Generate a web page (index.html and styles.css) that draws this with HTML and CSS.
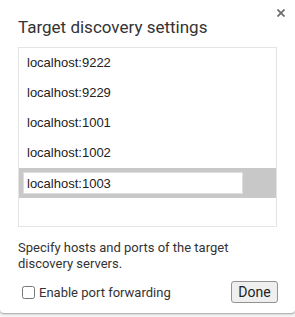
FILE: index.html
```html
<!DOCTYPE html>
<html>
<head>
<meta charset="utf-8">
<link rel="stylesheet" href="styles.css">
</head>
<body>
<div class="dialog">
  <button class="close" aria-label="Close">
    <svg width="8" height="8" viewBox="0 0 8 8"><path d="M0.5 0.5 L7.5 7.5 M7.5 0.5 L0.5 7.5" stroke="#6e6e6e" stroke-width="1.8" fill="none"/></svg>
  </button>
  <div class="title">Target discovery settings</div>
  <div class="list">
    <div class="row">localhost:9222</div>
    <div class="row">localhost:9229</div>
    <div class="row">localhost:1001</div>
    <div class="row">localhost:1002</div>
    <div class="row selected"><input class="edit" type="text" value="localhost:1003"></div>
  </div>
  <div class="desc">Specify hosts and ports of the target discovery servers.</div>
  <div class="footer">
    <label class="check"><input type="checkbox" class="box"><span>Enable port forwarding</span></label>
    <button class="done">Done</button>
  </div>
</div>
</body>
</html>
```
FILE: styles.css
```css
html, body {
  margin: 0;
  padding: 0;
}
body {
  background: #f4f4f4;
  width: 295px;
  height: 317px;
  overflow: hidden;
}
.dialog {
  position: relative;
  box-sizing: border-box;
  width: 295px;
  height: 313px;
  background: #fff;
  padding: 16px 17px 0 18px;
  border-radius: 0 0 4px 4px;
  box-shadow: 0 1px 2px rgba(0, 0, 0, 0.35);
  font-family: Roboto, "Noto Sans", sans-serif;
}
.close {
  position: absolute;
  top: 9px;
  right: 10px;
  width: 8px;
  height: 8px;
  padding: 0;
  border: 0;
  background: none;
  display: block;
}
.close svg {
  display: block;
}
.title {
  font-size: 17px;
  line-height: 22px;
  color: #333;
}
.list {
  box-sizing: border-box;
  width: 259px;
  height: 180px;
  margin-top: 9px;
  border: 1px solid #e4e4e4;
}
.row {
  height: 30px;
  line-height: 30px;
  padding-left: 8px;
  font-family: "Liberation Sans", Arial, sans-serif;
  font-size: 13px;
  color: #222;
}
.row.selected {
  background: #c8c8c8;
  padding: 4px 0 4px 4px;
  box-sizing: border-box;
}
.edit {
  display: block;
  box-sizing: border-box;
  width: 220px;
  height: 22px;
  margin: 0;
  padding: 0 3px;
  border: 1px solid #dedede;
  outline: none;
  background: #fff;
  font-family: "Liberation Sans", Arial, sans-serif;
  font-size: 13px;
  color: #222;
}
.desc {
  margin-top: 13px;
  font-size: 13px;
  line-height: 16px;
  color: #333;
}
.footer {
  margin-top: 9px;
  display: flex;
  justify-content: space-between;
  align-items: center;
}
.check {
  display: flex;
  align-items: center;
  font-size: 13px;
  color: #333;
  margin-top: 1px;
}
.box {
  width: 13px;
  height: 13px;
  margin: 0 4px 0 4px;
}
.done {
  box-sizing: border-box;
  width: 47px;
  height: 22px;
  padding: 0;
  border: 1px solid #939393;
  border-radius: 3px;
  background: #efefef;
  font-family: Roboto, "Noto Sans", sans-serif;
  font-size: 14px;
  color: #222;
}
```
